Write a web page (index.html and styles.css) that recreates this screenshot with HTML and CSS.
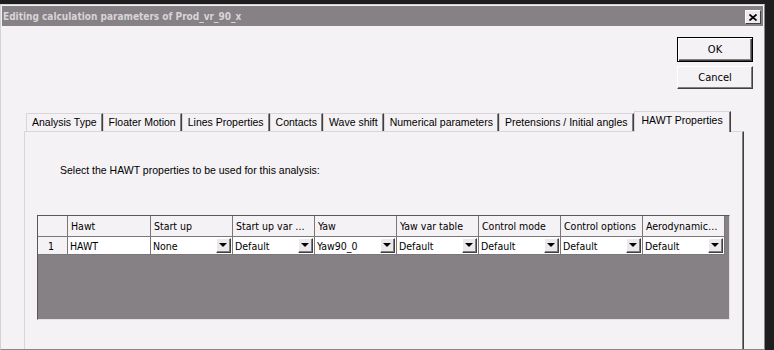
FILE: index.html
```html
<!DOCTYPE html>
<html lang="en">
<head>
  <meta charset="UTF-8" />
  <title>Editing calculation parameters of Prod_vr_90_x</title>
  <link rel="stylesheet" href="styles.css">
</head>
<body>

<div class="window">
  <div class="titlebar">
    <span class="title">Editing calculation parameters of Prod_vr_90_x</span>
    <button class="close">
      <svg width="8" height="7" viewBox="0 0 8 7"><path d="M0.5 0.5L7.5 6.5M7.5 0.5L0.5 6.5" stroke="#000" stroke-width="1.7" fill="none"/></svg>
    </button>
  </div>

  <div class="content">
    <div class="buttons">
      <button class="btn default">OK</button>
      <button class="btn">Cancel</button>
    </div>

    <div class="tabs">
      <div class="tab">Analysis Type</div>
      <div class="tab">Floater Motion</div>
      <div class="tab">Lines Properties</div>
      <div class="tab">Contacts</div>
      <div class="tab">Wave shift</div>
      <div class="tab">Numerical parameters</div>
      <div class="tab">Pretensions / Initial angles</div>
      <div class="tab active">HAWT Properties</div>
    </div>

    <div class="panel">
      <p class="hint">Select the HAWT properties to be used for this analysis:</p>

      <div class="grid">
        <div class="row head">
          <div class="cell rh"></div>
          <div class="cell wide">Hawt</div>
          <div class="cell">Start up</div>
          <div class="cell">Start up var …</div>
          <div class="cell">Yaw</div>
          <div class="cell">Yaw var table</div>
          <div class="cell">Control mode</div>
          <div class="cell">Control options</div>
          <div class="cell">Aerodynamic…</div>
        </div>
        <div class="row data">
          <div class="cell rh">1</div>
          <div class="cell wide">HAWT</div>
          <div class="cell combo"><span>None</span><i class="drop"></i></div>
          <div class="cell combo"><span>Default</span><i class="drop"></i></div>
          <div class="cell combo"><span>Yaw90_0</span><i class="drop"></i></div>
          <div class="cell combo"><span>Default</span><i class="drop"></i></div>
          <div class="cell combo"><span>Default</span><i class="drop"></i></div>
          <div class="cell combo"><span>Default</span><i class="drop"></i></div>
          <div class="cell combo"><span>Default</span><i class="drop"></i></div>
        </div>
      </div>
    </div>
  </div>
</div>

</body>
</html>
```

FILE: styles.css
```css
body {
  margin: 0;
  background: #1e1e1e;
  font-family: "Liberation Sans", Arial, sans-serif;
  font-size: 10.5px;
  color: #000;
}
.window {
  margin-top: 4px;
  width: 765px;
  height: 346px;
  box-sizing: border-box;
  border: 1px solid;
  border-color: #d4d0d4 #8a868a #8a868a #d4d0d4;
  padding: 1px;
  background: #f5f2f5;
  overflow: hidden;
}
.titlebar {
  height: 20px;
  background: #858185;
  display: flex;
  align-items: center;
  justify-content: space-between;
  padding: 0 2px 0 1px;
}
.title {
  font-family: "DejaVu Sans Condensed", "DejaVu Sans", sans-serif;
  font-weight: bold;
  font-size: 10px;
  color: #d8d4d8;
  padding-top: 1px;
}
.close {
  width: 16px;
  height: 14px;
  box-sizing: border-box;
  margin-top: 2px;
  padding: 0;
  border: 1px solid;
  border-color: #fff #404040 #404040 #fff;
  background: #eeeaee;
  display: flex;
  align-items: center;
  justify-content: center;
}
.content {
  display: flex;
  flex-direction: column;
}
.buttons {
  display: flex;
  flex-direction: column;
  align-items: flex-end;
  gap: 4px;
  padding: 11px 10px 0 0;
}
.btn {
  width: 76px;
  height: 23px;
  box-sizing: border-box;
  padding: 0;
  border: 1px solid;
  border-color: #fff #404040 #404040 #fff;
  box-shadow: inset -1px -1px #808080;
  background: #f5f2f5;
  font-family: "DejaVu Sans Condensed", "DejaVu Sans", sans-serif;
  font-size: 11px;
  color: #000;
}
.btn.default {
  height: 25px;
  border-color: #000;
  box-shadow: inset 1px 1px #fff, inset -1px -1px #404040, inset -2px -2px #808080;
}
.tabs {
  display: flex;
  align-items: flex-end;
  margin: 22px 0 0 22px;
  padding-left: 2px;
  position: relative;
  z-index: 1;
}
.tab {
  height: 18px;
  box-sizing: border-box;
  padding: 0 5px 0 5px;
  border-style: solid;
  border-width: 1px 1px 0 1px;
  border-color: #d9d5d9 #404040 transparent #d9d5d9;
  box-shadow: inset -1px 0 #808080;
  line-height: 17px;
  white-space: nowrap;
}
.tab.active {
  height: 21px;
  margin: 0 -2px -1px 0;
  padding: 0 7px 3px 7px;
  background: #f5f2f5;
  line-height: 16px;
}
.panel {
  margin-left: 22px;
  width: 720px;
  height: 230px;
  box-sizing: border-box;
  border-style: solid;
  border-width: 1px 1px 0 1px;
  border-color: #d9d5d9 #404040 transparent #d9d5d9;
  box-shadow: inset -1px 0 #808080;
  padding: 32px 0 0 12px;
}
.hint {
  margin: 0 0 0 23px;
  line-height: 13px;
}
.grid {
  width: 693px;
  height: 105px;
  box-sizing: border-box;
  margin-top: 38px;
  border: 1px solid;
  border-color: #5a565a #e4e0e4 #e4e0e4 #5a565a;
  background: #858185;
  font-family: "DejaVu Sans Condensed", "DejaVu Sans", sans-serif;
  font-size: 10.5px;
}
.row {
  display: flex;
}
.cell {
  width: 82px;
  box-sizing: border-box;
  border-right: 1px solid #7a767a;
  border-bottom: 1px solid #7a767a;
  padding-left: 3px;
  white-space: nowrap;
  overflow: hidden;
  display: flex;
  align-items: center;
}
.cell.rh {
  width: 30px;
  background: #f5f2f5;
}
.cell.wide {
  width: 83px;
}
.head .cell {
  height: 21px;
  background: #f5f2f5;
}
.data .cell {
  height: 18px;
  background: #fff;
  padding-left: 2px;
}
.data .cell.rh {
  background: #f5f2f5;
  padding-left: 10px;
}
.combo {
  justify-content: space-between;
}
.drop {
  width: 15px;
  height: 15px;
  box-sizing: border-box;
  margin-right: 1px;
  border: 1px solid;
  border-color: #fff #404040 #404040 #fff;
  box-shadow: inset -1px -1px #808080;
  background: #ece9ec;
  display: flex;
  align-items: center;
  justify-content: center;
}
.drop::after {
  content: "";
  border-left: 4px solid transparent;
  border-right: 4px solid transparent;
  border-top: 4px solid #000;
  margin: 0 1px 1px 0;
}
```
